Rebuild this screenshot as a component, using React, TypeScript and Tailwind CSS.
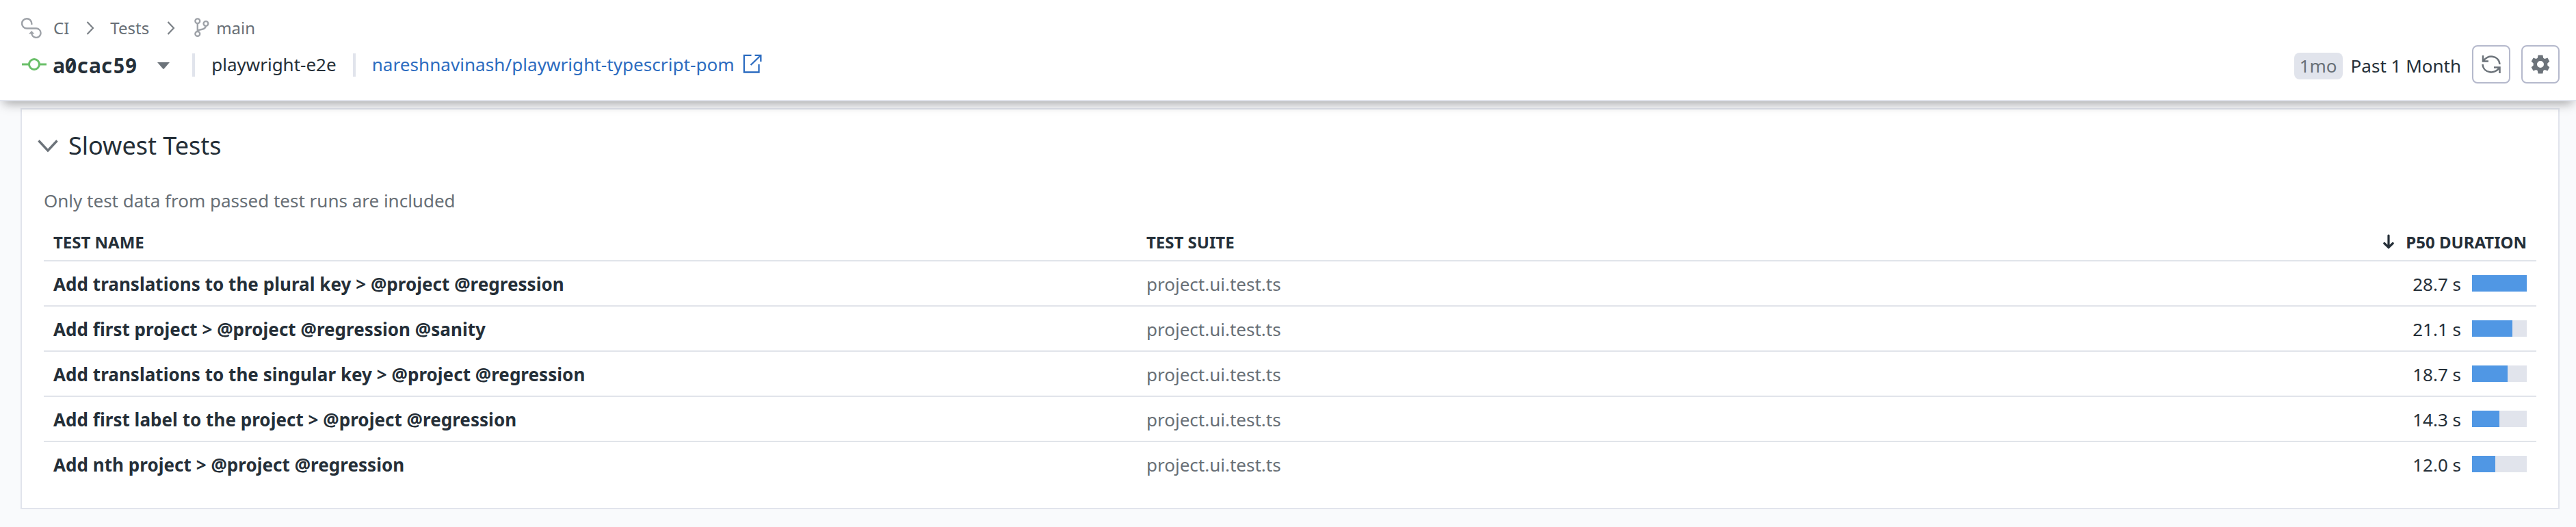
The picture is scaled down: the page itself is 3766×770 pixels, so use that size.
import React from "react";

const tests = [
  { name: "Add translations to the plural key > @project @regression", suite: "project.ui.test.ts", time: 28.7, pct: 100 },
  { name: "Add first project > @project @regression @sanity", suite: "project.ui.test.ts", time: 21.1, pct: 73.6 },
  { name: "Add translations to the singular key > @project @regression", suite: "project.ui.test.ts", time: 18.7, pct: 65 },
  { name: "Add first label to the project > @project @regression", suite: "project.ui.test.ts", time: 14.3, pct: 49.8 },
  { name: "Add nth project > @project @regression", suite: "project.ui.test.ts", time: 12.0, pct: 42.1 },
];

function Crumb() {
  return (
    <svg width="12" height="20" viewBox="0 0 12 20" fill="none" stroke="#7b8187" strokeWidth="2.2">
      <path d="M1.5 1 10 10 1.5 19" />
    </svg>
  );
}

function Header() {
  return (
    <header className="relative z-10 flex h-[148px] items-start justify-between border-b-2 border-[#e1e4ec] bg-white shadow-[0_8px_15px_-5px_rgba(0,0,0,0.36)]">
      <div className="flex flex-col pl-[31px]">
        <nav className="mt-[23px] flex h-[36px] items-center text-[24px] leading-[36px] text-[#686f76]">
          <svg width="30" height="30" viewBox="0 0 30 30" fill="none" stroke="#9ea2a8" strokeWidth="2.4">
            <path d="M15.3 10V8.5A7.1 7.1 0 1 0 8.500 15.500H22A6.700 6.700 0 1 1 15.200 22.500" />
            <path d="M11 23.500 15.200 19 19.400 23.500Z" fill="#9ea2a8" stroke="none" />
          </svg>
          <span className="ml-[17px]">CI</span>
          <span className="ml-[25px]"><Crumb /></span>
          <span className="ml-[23px]">Tests</span>
          <span className="ml-[26px]"><Crumb /></span>
          <svg className="mb-[3px] ml-[28px]" width="22" height="28" viewBox="0 0 22 28" fill="none" stroke="#9ea2a8" strokeWidth="2.4">
            <circle cx="4.8" cy="4.8" r="3.4" />
            <circle cx="4.8" cy="23.4" r="3.4" />
            <circle cx="17" cy="8.5" r="3.4" />
            <path d="M4.8 8V20M5 18.500C9 16.500 16 18 17 12" />
          </svg>
          <span className="ml-[10px]">main</span>
        </nav>
        <div className="mt-[16px] flex h-[38px] items-center text-[26px] text-[#252f38]">
          <svg width="38" height="24" viewBox="0 0 38 24" fill="none" stroke="#6abf69" strokeWidth="3">
            <circle cx="19" cy="12" r="7.5" />
            <path d="M1 12H11M27 12H37" />
          </svg>
          <span className="ml-[8px] mt-[2px] font-['Noto_Sans_Mono','DejaVu_Sans_Mono',monospace] text-[30px] font-bold tracking-[-0.4px]">a0cac59</span>
          <svg className="ml-[30px] mt-[3px]" width="18" height="10" viewBox="0 0 18 10">
            <path d="M0 0H18L10 9.300Q9 10.300 8 9.300Z" fill="#6c737a" />
          </svg>
          <div className="ml-[33px] mt-px h-[34px] w-[4px] bg-[#e1e4ec]" />
          <span className="ml-[24px]">playwright-e2e</span>
          <div className="ml-[24px] mt-px h-[34px] w-[4px] bg-[#e1e4ec]" />
          <a className="ml-[24px] tracking-[0.07px] text-[#2c6cc0]">nareshnavinash/playwright-typescript-pom</a>
          <svg className="mb-[3px] ml-[12px]" width="28" height="28" viewBox="0 0 28 28" fill="none" stroke="#2c6cc0" strokeWidth="2.3">
            <path d="M12.500 1.800H1.800V26.500H23.500V15M17.500 1.800H26.300V11M26 2 11.500 16" />
          </svg>
        </div>
      </div>
      <div className="mt-[66px] flex items-center pr-[24px] text-[26px] text-[#252f38]">
        <span className="mt-[5px] h-[39px] rounded-[8px] bg-[#e1e4ec] px-[8px] leading-[39px] text-[#686f76]">1mo</span>
        <span className="ml-[12px] mt-[4px]">Past 1 Month</span>
        <button className="ml-[16px] flex size-[56px] items-center justify-center rounded-[8px] border-2 border-[#b5b9cc]">
          <svg width="28" height="28" viewBox="0 0 28 28" fill="none" stroke="#6c737a" strokeWidth="2.5">
            <path d="M2 1V9.500H10M2.500 9.300C8 -1 25.500 .5 26.500 14M26.500 27V18.500H18M26 18.700C20.500 29 2.500 27.500 1.500 14" />
          </svg>
        </button>
        <button className="ml-[16px] flex size-[56px] items-center justify-center rounded-[8px] border-2 border-[#b5b9cc]">
          <svg width="28" height="28" viewBox="0 0 28 28" fill="#6c737a" fillRule="evenodd">
            <path d="M10.600 .5H17.400L18.200 4.700L20.300 5.900L24.400 4.400L27.300 9.800L24.300 12.600V15.400L27.300 18.200L24.400 23.600L20.300 22.100L18.200 23.300L17.400 27.500H10.600L9.800 23.300L7.700 22.100L3.600 23.600L.7 18.200L3.700 15.400V12.600L.7 9.800L3.600 4.400L7.700 5.900L9.800 4.700ZM14 9A5 5 0 1 0 14 19A5 5 0 1 0 14 9Z" />
          </svg>
        </button>
      </div>
    </header>
  );
}

export default function App() {
  return (
    <div className="h-[770px] w-[3766px] overflow-hidden bg-[#f9fafc] font-['Noto_Sans',sans-serif] text-[26px] text-[#252f38]">
      <Header />
      <section className="ml-[30px] mr-[24px] mt-[10px] h-[586px] border-2 border-[#e1e4ec] bg-white px-[32px]">
        <div className="-ml-[9px] flex h-[106px] items-center">
          <svg width="30" height="19" viewBox="0 0 30 19" fill="none" stroke="#6c737a" strokeWidth="3.4">
            <path d="M1.5 1.5 15 16 28.500 1.500" />
          </svg>
          <h2 className="ml-[15px] text-[36px]">Slowest Tests</h2>
        </div>
        <p className="mt-[5px] h-[45px] leading-[44px] text-[#686f76]">Only test data from passed test runs are included</p>
        <div className="grid h-[66px] grid-cols-[1598px_1fr_auto] items-center border-b-2 border-[#e1e4ea] px-[14px] pt-[11px] text-[24px] font-bold">
          <span>TEST NAME</span>
          <span>TEST SUITE</span>
          <span className="flex items-center">
            <svg className="mb-[2px] mr-[17px]" width="16" height="22" viewBox="0 0 16 22" fill="none" stroke="#252f38" strokeWidth="3.2" strokeLinecap="round">
              <path d="M8 2V19M1.800 13.500 8 19.500 14.200 13.500" />
            </svg>
            P50 DURATION
          </span>
        </div>
        {tests.map((t) => (
          <div key={t.name} className="grid h-[66px] grid-cols-[1598px_1fr_auto] items-center border-b-2 border-[#e1e4ea] px-[14px] last:border-transparent">
            <span className="mt-[2px] font-bold tracking-[0.045px]">{t.name}</span>
            <span className="mt-[2px] text-[#686f76]">{t.suite}</span>
            <span className="flex items-center">
              <span className="mt-[2px]">{t.time.toFixed(1)} s</span>
              <span className="ml-[16px] h-[24px] w-[80px] bg-[#e1e4ec]">
                <span className="block h-full bg-[#5097e4]" style={{ width: `${t.pct}%` }} />
              </span>
            </span>
          </div>
        ))}
      </section>
    </div>
  );
}
